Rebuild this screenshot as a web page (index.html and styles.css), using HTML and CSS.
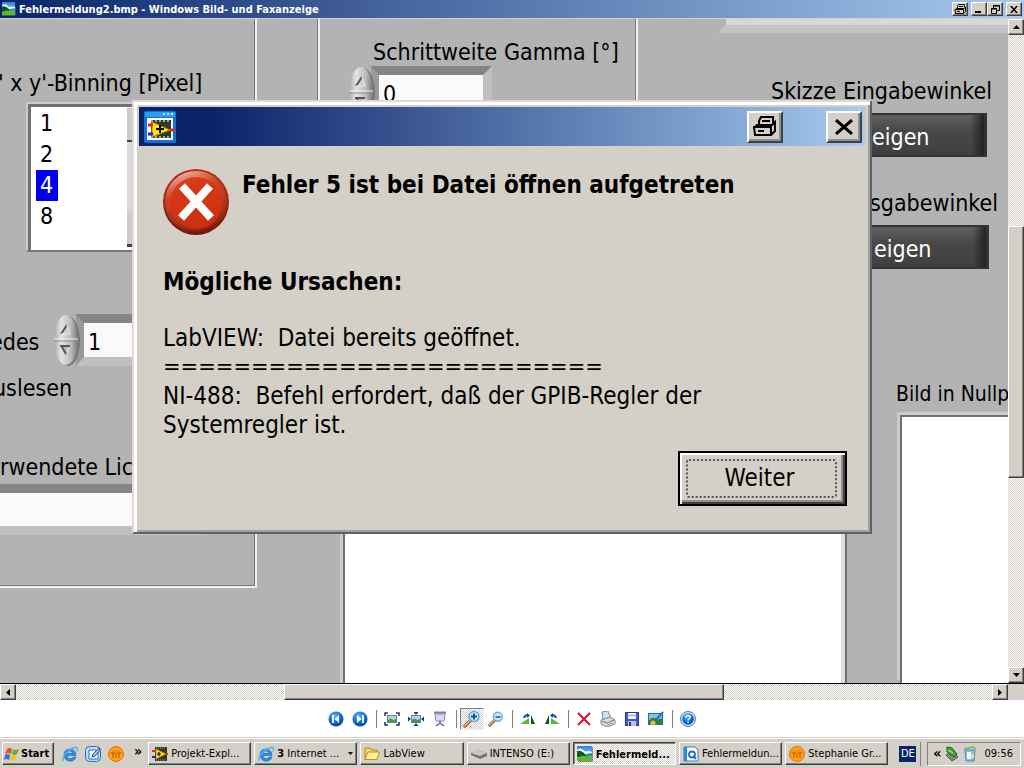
FILE: index.html
```
<!DOCTYPE html>
<html lang="de">
<head>
    <meta charset="UTF-8">
    <meta name="viewport" content="width=device-width, initial-scale=1.0">
    <title>Fehlermeldung2.bmp - Windows Bild- und Faxanzeige</title>
    <link rel="stylesheet" href="styles.css">
</head>
<body>

<!-- shared icons -->
<svg class="defs" aria-hidden="true">
    <defs>
        <linearGradient id="sky" x1="0" y1="0" x2="0" y2="1">
            <stop offset="0" stop-color="#2a80d8"/><stop offset="1" stop-color="#d8f0ff"/>
        </linearGradient>
        <radialGradient id="red" cx="0.5" cy="0.45" r="0.55">
            <stop offset="0" stop-color="#e03a14"/><stop offset="0.65" stop-color="#d03010"/><stop offset="0.85" stop-color="#b02a12"/><stop offset="1" stop-color="#5c1408"/>
        </radialGradient>
        <linearGradient id="shine" x1="0.2" y1="0" x2="0.6" y2="1">
            <stop offset="0" stop-color="#fff" stop-opacity="0.75"/><stop offset="0.35" stop-color="#f0a080" stop-opacity="0.2"/><stop offset="1" stop-color="#400" stop-opacity="0.3"/>
        </linearGradient>
        <radialGradient id="blue" cx="0.4" cy="0.3" r="0.8">
            <stop offset="0" stop-color="#5cb8ff"/><stop offset="0.5" stop-color="#0a70dc"/><stop offset="1" stop-color="#0838a0"/>
        </radialGradient>
        <linearGradient id="metal" x1="0" y1="0" x2="1" y2="0">
            <stop offset="0" stop-color="#aaa"/><stop offset="0.3" stop-color="#e4e4e4"/><stop offset="0.7" stop-color="#bbb"/><stop offset="1" stop-color="#777"/>
        </linearGradient>
    </defs>
    <symbol id="i-picture" viewBox="0 0 16 16">
        <rect x="1" y="1" width="15" height="15" fill="#333" opacity="0.5"/>
        <rect width="15" height="15" fill="url(#sky)"/>
        <path d="M0 4q3-3 6 0t5 1l4 1v4H0z" fill="#fff"/>
        <path d="M0 5q4-1 7 2t4 4H0z" fill="#0a5a1c"/>
        <path d="M9 8l6-1v3H9z" fill="#2080c8"/>
        <path d="M0 12q4-3 8-2t7 0v5H0z" fill="#5cb82c"/>
    </symbol>
    <symbol id="i-labview" viewBox="0 0 16 16">
        <rect x="3" y="1" width="12" height="14" fill="#303828"/>
        <path d="M4 2h10M4 14h10" stroke="#8a9" stroke-dasharray="1 1"/>
        <path d="M4 3l10 5-10 5z" fill="#ffe000" stroke="#a88800" stroke-width="0.6"/>
        <path d="M5 8h4M7 6v4" stroke="#000" stroke-width="1.2"/>
        <path d="M0 5h4M13 8h3" stroke="#e82030" stroke-width="2"/>
        <path d="M0 11h4" stroke="#2020e0" stroke-width="2"/>
    </symbol>
    <symbol id="i-ie" viewBox="0 0 16 16">
        <path d="M14 9.500H5.200c0 4 5 4 5.800 1.500h3c-1.500 6-12 6-12-2.500C2 1 14 1 14 9.500zM5.300 7.300h5.500c-.5-3-5-3-5.500 0z" fill="#2490e8" stroke="#0c58b0" stroke-width="0.5"/>
        <path d="M2 14.500C-3 13 8 1 14 1.500c2 .3 1.500 2.500.8 4" fill="none" stroke="#58b0f0" stroke-width="1.300"/>
    </symbol>
    <symbol id="i-ball" viewBox="0 0 16 16">
        <circle cx="8" cy="8" r="7.500" fill="#ffa010" stroke="#d87800"/>
        <path d="M5 12V7M8 12V7M11 12V7M2.500 7H7M9 7h4.500M5 4.500v1M8 4.500v1M11 4.500v1" stroke="#b85800" fill="none"/>
    </symbol>
    <symbol id="i-printer" viewBox="0 0 13 11">
        <path d="M3.500 4.500v-2l1-2h6v3M1.500 5.500l1-1h7v4M1 5.500h8.500v4h-8zM9.500 5l2-2v4.500l-2 2M5 2.500h4M3 7.500h3" fill="none" stroke="#000"/>
    </symbol>
    <symbol id="i-close" viewBox="0 0 8 7">
        <path d="M0 0h2l2 2.500L6 0h2L5 3.500 8 7H6L4 4.500 2 7H0l3-3.500z" fill="#000"/>
    </symbol>
    <symbol id="i-lens" viewBox="0 0 18 18">
        <path d="M8 10l-6 6" stroke="#a86838" stroke-width="3.500" stroke-linecap="round"/>
        <path d="M7.500 10l-6 6" stroke="#e8b888" stroke-width="1.200"/>
        <circle cx="11" cy="6.500" r="5" fill="#c8e8ff" stroke="#70a8d8" stroke-width="1.600"/>
    </symbol>
    <symbol id="i-spin" viewBox="0 0 26 52">
        <ellipse cx="14" cy="27" rx="12" ry="25" fill="#777"/>
        <ellipse cx="12" cy="26" rx="12" ry="25" fill="url(#metal)"/>
        <path d="M0 25h24" stroke="#eee"/><path d="M0 27h24" stroke="#909090"/>
        <path d="M7 20l6-9" fill="none" stroke="#555" stroke-width="2"/>
        <path d="M13 11l3 9H7" fill="none" stroke="#eee"/>
        <path d="M7 32h9l-4 8z" fill="#bbb" stroke="#eee"/><path d="M6 32h10M8 33l4 7" stroke="#555" stroke-width="2"/>
    </symbol>
</svg>

<header class="titlebar">
    <svg class="icon-14"><use href="#i-picture"/></svg>
    <h1>Fehlermeldung2.bmp - Windows Bild- und Faxanzeige</h1>
    <div class="window-buttons">
        <button class="caption-btn spaced" aria-label="Drucken"><svg width="13" height="11"><use href="#i-printer"/></svg></button>
        <button class="caption-btn" aria-label="Minimieren"><svg width="8" height="8"><path d="M0 7h6" stroke="#000" stroke-width="2"/></svg></button>
        <button class="caption-btn spaced" aria-label="Wiederherstellen"><svg width="9" height="9"><path d="M2.500 3V.5h6v5H6M2 1h7M.5 3.500h5v5h-5zM0 4h6" fill="none" stroke="#000"/></svg></button>
        <button class="caption-btn" aria-label="Schließen"><svg width="8" height="7"><use href="#i-close"/></svg></button>
    </div>
</header>

<main class="viewer">
    <div class="canvas">
        <!-- front panel: freely placed controls -->
        <div class="frame frame-left"></div>
        <div class="frame frame-middle"></div>
        <div class="ridge"></div>

        <label class="text binning-label" for="binning">' x y'-Binning [Pixel]</label>
        <div class="list">
            <select id="binning" size="4">
                <option>1</option>
                <option>2</option>
                <option selected>4</option>
                <option>8</option>
            </select>
            <div class="list-scroll"></div>
        </div>

        <label class="text gamma-label" for="gamma">Schrittweite Gamma [°]</label>
        <div class="spin gamma">
            <svg width="26" height="52"><use href="#i-spin"/></svg>
            <input type="text" id="gamma" value="0">
        </div>

        <label class="text each-label" for="each">edes</label>
        <div class="spin each">
            <svg width="26" height="52"><use href="#i-spin"/></svg>
            <input type="text" id="each" value="1">
        </div>
        <span class="text read-label">uslesen</span>

        <label class="text light-label" for="light">rwendete Lic</label>
        <input type="text" class="light" id="light">

        <span class="text input-angle">Skizze Eingabewinkel</span>
        <button class="dark-btn show-input">eigen</button>
        <span class="text output-angle">sgabewinkel</span>
        <button class="dark-btn show-output">eigen</button>

        <span class="text image-label">Bild in Nullp</span>
        <div class="picture picture-middle"></div>
        <div class="picture picture-right"></div>

        <section class="dialog" role="dialog" aria-labelledby="dialog-title">
            <div class="dialog-bar">
                <svg class="dialog-icon" width="32" height="32" viewBox="0 0 32 32">
                    <rect width="32" height="32" rx="2" fill="#1470dc"/>
                    <path d="M1 1h30v5H1z" fill="#28a0f0"/>
                    <path d="M19 3h10" stroke="#b8e8ff" stroke-width="2" stroke-dasharray="2 2"/>
                    <rect x="3" y="7" width="26" height="22" fill="#fff"/>
                    <rect x="7" y="9" width="20" height="18" fill="#303828"/>
                    <path d="M7 10h20M7 26h20" stroke="#9aa" stroke-width="2" stroke-dasharray="2 2"/>
                    <path d="M8 11l18 8-18 7z" fill="#ffe000" stroke="#a88800"/>
                    <path d="M12 18h8M16 14v8" stroke="#000" stroke-width="2"/>
                    <path d="M4 14h5M26 19h5" stroke="#e82030" stroke-width="3"/>
                    <path d="M4 23h5" stroke="#2020e0" stroke-width="3"/>
                </svg>
                <button class="dialog-btn print" aria-label="Drucken"><svg width="28" height="22"><use href="#i-printer"/></svg></button>
                <button class="dialog-btn" aria-label="Schließen"><svg width="18" height="16"><path d="M1 1l16 14M17 1L1 15" stroke="#000" stroke-width="3"/></svg></button>
            </div>
            <div class="dialog-body">
                <div class="dialog-head">
                    <svg width="66" height="66" viewBox="0 0 66 66">
                        <circle cx="33" cy="33" r="33" fill="url(#red)"/>
                        <circle cx="33" cy="33" r="31" fill="url(#shine)"/>
                        <circle cx="33" cy="34" r="26" fill="#d43210" opacity="0.8"/>
                        <path d="M19 17l29 32M47 17L18 49" stroke="#fff" stroke-width="8"/>
                    </svg>
                    <h2 id="dialog-title">Fehler 5 ist bei Datei öffnen aufgetreten</h2>
                </div>
                <h3>Mögliche Ursachen:</h3>
                <p>LabVIEW:  Datei bereits geöffnet.</p>
                <p class="rule">=========================</p>
                <p>NI-488:  Befehl erfordert, daß der GPIB-Regler der
Systemregler ist.</p>
                <button class="continue"><span>Weiter</span></button>
            </div>
        </section>
    </div>

    <div class="scroll vertical">
        <button class="scroll-btn" aria-label="Nach oben"><svg width="7" height="4"><path d="M0 4h7L3.500 0z"/></svg></button>
        <div class="track before"></div>
        <div class="thumb"></div>
        <div class="track after"></div>
        <button class="scroll-btn" aria-label="Nach unten"><svg width="7" height="4"><path d="M0 0h7L3.500 4z"/></svg></button>
    </div>
    <div class="scroll horizontal">
        <button class="scroll-btn" aria-label="Nach links"><svg width="4" height="7"><path d="M4 0v7L0 3.500z"/></svg></button>
        <div class="track before"></div>
        <div class="thumb"></div>
        <div class="track after"></div>
        <button class="scroll-btn" aria-label="Nach rechts"><svg width="4" height="7"><path d="M0 0v7l4-3.500z"/></svg></button>
    </div>
</main>

<nav class="toolbar">
    <button class="tool" aria-label="Vorheriges Bild"><svg width="16" height="16"><circle cx="8" cy="8" r="7.500" fill="url(#blue)"/><path d="M5 4v8" stroke="#fff" stroke-width="2"/><path d="M11 4v8L6.500 8z" fill="#fff"/></svg></button>
    <button class="tool" aria-label="Nächstes Bild"><svg width="16" height="16"><circle cx="8" cy="8" r="7.500" fill="url(#blue)"/><path d="M11 4v8" stroke="#fff" stroke-width="2"/><path d="M5 4v8l4.500-4z" fill="#fff"/></svg></button>
    <span class="sep"></span>
    <button class="tool" aria-label="Optimale Größe"><svg width="16" height="14"><path d="M1 4V1h3M12 1h3v3M15 10v3h-3M4 13H1v-3" fill="none" stroke="#183878" stroke-width="1.500"/><rect x="3.500" y="3.500" width="9" height="7" fill="#a8d8f8" stroke="#6080a0"/><path d="M4 8q3-3 5 0l3-1v3H4z" fill="#48a020"/></svg></button>
    <button class="tool" aria-label="Tatsächliche Größe"><svg width="16" height="14"><rect x="3.500" y="3.500" width="9" height="7" fill="#a8d8f8" stroke="#6080a0"/><path d="M4 8q3-3 5 0l3-1v3H4z" fill="#48a020"/><path d="M5.500 0h5L8 3zM5.500 14h5L8 11zM0 4.500v5L3 7zM16 4.500v5L13 7z" fill="#183878"/></svg></button>
    <button class="tool" aria-label="Diashow"><svg width="14" height="16"><path d="M1 1.500h12" stroke="#7878a8" stroke-width="2"/><path d="M2 3h10l-1 7H3z" fill="#dcdcf8" stroke="#8888b8"/><path d="M7 10v3M7 12l-4 3M7 12l4 3" stroke="#606080" stroke-width="1.500"/></svg></button>
    <span class="sep"></span>
    <button class="tool pressed" aria-label="Vergrößern"><svg width="18" height="18"><use href="#i-lens"/><path d="M11 3.500v6M8 6.500h6" stroke="#1050a8" stroke-width="2"/></svg></button>
    <button class="tool" aria-label="Verkleinern"><svg width="16" height="16"><use href="#i-lens"/><path d="M7.500 6h5" stroke="#1050a8" stroke-width="1.500"/></svg></button>
    <span class="sep"></span>
    <button class="tool" aria-label="Im Uhrzeigersinn drehen"><svg width="16" height="12"><path d="M0 11L9 5v6z" fill="#58b838"/><path d="M11 2l4 9h-4z" fill="#105818"/><path d="M4 5q1-3 4-3" fill="none" stroke="#1848a0" stroke-width="2"/><path d="M7 0l3 2.500L7 5z" fill="#1848a0"/></svg></button>
    <button class="tool" aria-label="Gegen den Uhrzeigersinn drehen"><svg width="16" height="12"><path d="M16 11L7 5v6z" fill="#58b838"/><path d="M5 2l-4 9h4z" fill="#105818"/><path d="M12 5q-1-3-4-3" fill="none" stroke="#1848a0" stroke-width="2"/><path d="M9 0L6 2.500 9 5z" fill="#1848a0"/></svg></button>
    <span class="sep"></span>
    <button class="tool" aria-label="Löschen"><svg width="14" height="14"><path d="M1 1l12 12M13 1L1 13" stroke="#d81030" stroke-width="2"/></svg></button>
    <button class="tool" aria-label="Drucken"><svg width="16" height="16"><path d="M3 8L2 1l6-1 3 7z" fill="#c8e4fc" stroke="#6890b0"/><path d="M1 9l9-3 5 3v4l-8 3-6-3z" fill="#ddd" stroke="#888"/><path d="M2 10l5 2 7-3" fill="none" stroke="#777"/><path d="M7 14l6-2" stroke="#a8a050"/></svg></button>
    <button class="tool" aria-label="Speichern"><svg width="14" height="14"><rect x="0.500" y="0.500" width="13" height="13" fill="#4858c8" stroke="#283898"/><rect x="3" y="1" width="8" height="6" fill="#e8ecff"/><path d="M3 3.500h8" stroke="#a0a8d8"/><rect x="3" y="9" width="8" height="5" fill="#c0c4d8"/><rect x="4" y="10" width="2" height="4" fill="#283898"/></svg></button>
    <button class="tool" aria-label="Bearbeiten"><svg width="16" height="15"><rect x="0.500" y="2.500" width="14" height="11" fill="#80c4f4" stroke="#306898"/><path d="M1 9q5-5 8 0l5-2v6H1z" fill="#288828"/><path d="M15 1L7 10" stroke="#2868c8" stroke-width="2"/><circle cx="5" cy="12" r="2.500" fill="#e8c030"/></svg></button>
    <span class="sep"></span>
    <button class="tool help" aria-label="Hilfe"><svg width="16" height="16"><circle cx="8" cy="8" r="7.500" fill="#d8e4f8" stroke="#5078b8"/><circle cx="8" cy="8" r="5.800" fill="url(#blue)"/><path d="M5.800 6.500c0-3 4.500-2.500 4.500-.3 0 1.500-2.200 1.500-2.200 3.300M8.100 10.500v1.500" fill="none" stroke="#fff" stroke-width="1.500"/></svg></button>
</nav>

<footer class="taskbar">
    <button class="start">
        <svg width="16" height="16"><path d="M3 3q2-2 5 0L7 8Q4 6 1 8z" fill="#e85020"/><path d="M9 3q3 2 6 0l-2 5q-3 2-5 0z" fill="#60b028"/><path d="M1 9q3-2 5 0l-1 5q-3-2-5 0z" fill="#3870d8"/><path d="M7 9q3 2 6 0l-2 5q-3 2-5 0z" fill="#f8c020"/></svg>
        Start
    </button>
    <div class="quick">
        <a href="#" aria-label="Internet Explorer"><svg class="icon-16"><use href="#i-ie"/></svg></a>
        <a href="#" aria-label="Outlook"><svg width="16" height="16"><rect x="0.500" y="0.500" width="15" height="15" rx="4" fill="#b8dcf8" stroke="#3070b0"/><path d="M4 4h7l2 2v7H4z" fill="#fff" stroke="#2868b0"/><path d="M14 2L8 8l-1 3 3-1 5-6z" fill="#a0c8f0" stroke="#205090"/></svg></a>
        <a href="#" aria-label="Stud.IP"><svg class="icon-16"><use href="#i-ball"/></svg></a>
        <span class="more">»</span>
    </div>
    <div class="tasks">
        <button class="task"><svg class="icon-16"><use href="#i-labview"/></svg><span>Projekt-Expl...</span></button>
        <button class="task"><svg class="icon-16"><use href="#i-ie"/></svg><span><b>3</b> Internet ...</span><svg class="drop" width="5" height="3"><path d="M0 0h5L2.500 3z"/></svg></button>
        <button class="task"><svg class="icon-16" viewBox="0 0 16 16"><path d="M1 13V3l1-1h4l2 2h5v9z" fill="#f8d860" stroke="#a88018"/><path d="M1 13.500L4 6h11.500L13 13.500z" fill="#fff098" stroke="#b89020"/></svg><span>LabView</span></button>
        <button class="task"><svg class="icon-16" viewBox="0 0 16 16"><path d="M0 7l6-3 10 3v3l-7 3-9-4z" fill="#707070"/><path d="M0 7l6-3 10 3-7 3z" fill="#c8c8c8"/></svg><span>INTENSO (E:)</span></button>
        <button class="task active"><svg class="icon-16"><use href="#i-picture"/></svg><span>Fehlermeld...</span></button>
        <button class="task"><svg class="icon-16" viewBox="0 0 16 16"><path d="M1 1h11l3 3v11H1z" fill="#fff" stroke="#3080c0"/><path d="M1 1h3v14H1z" fill="#2090d8"/><circle cx="9" cy="8.500" r="3" fill="none" stroke="#2070c0" stroke-width="1.800"/><path d="M10 10l3 3" stroke="#2070c0" stroke-width="2"/></svg><span>Fehlermeldun...</span></button>
        <button class="task"><svg class="icon-16"><use href="#i-ball"/></svg><span>Stephanie Gr...</span></button>
    </div>
    <span class="lang">DE</span>
    <div class="tray">
        <span class="more">«</span>
        <svg width="14" height="16"><path d="M1 9l7-3 5 5-6 4z" fill="#888" stroke="#555"/><path d="M2 1l5 1 5 6-3 3-7-5z" fill="#38a838" stroke="#186818"/><path d="M3 4l5 3" stroke="#c0f0c0"/></svg>
        <svg width="14" height="16"><path d="M2 4h10l-1 11H3z" fill="#88c0f0" stroke="#4888c8"/><path d="M4 6h4v7H4z" fill="#e8f8ff"/><path d="M1 3l9-2 3 2" fill="none" stroke="#70b840" stroke-width="1.500"/><path d="M8 8h3v4H8z" fill="#f0e070"/></svg>
        <time>09:56</time>
    </div>
</footer>

</body>
</html>
```
FILE: styles.css
```
* {
    box-sizing: border-box;
}

body {
    margin: 0;
    height: 100vh;
    display: flex;
    flex-direction: column;
    overflow: hidden;
    background-color: #d4d0c8;
    color: #000;
    font-family: "DejaVu Sans Condensed", "DejaVu Sans", sans-serif;
    font-size: 11px;
}

button, input, select {
    font: inherit;
    color: inherit;
    margin: 0;
    padding: 0;
    border-radius: 0;
}

h1, h2, h3, p {
    margin: 0;
}

svg {
    display: block;
    flex: none;
}

.defs {
    position: absolute;
    width: 0;
    height: 0;
}

.icon-14 {
    width: 14px;
    height: 14px;
}

.icon-16 {
    width: 16px;
    height: 16px;
}

/* title bar */
.titlebar {
    flex: none;
    height: 19px;
    display: flex;
    align-items: center;
    gap: 3px;
    padding: 0 2px;
    background: linear-gradient(to right, #0a246a, #a6caf0);
    border-bottom: 1px solid #d4d0c8;
    color: white;
}

.titlebar h1 {
    flex: 1;
    font-size: 11px;
    white-space: nowrap;
}

.window-buttons {
    display: flex;
}

.caption-btn, .scroll-btn, .thumb {
    display: flex;
    align-items: center;
    justify-content: center;
    background-color: #d4d0c8;
    border: 1px solid;
    border-color: #fff #404040 #404040 #fff;
    box-shadow: inset -1px -1px #808080;
}

.caption-btn {
    width: 16px;
    height: 14px;
}

.caption-btn.spaced {
    margin-right: 3px;
}

/* viewer */
.viewer {
    flex: 1;
    min-height: 0;
    display: grid;
    grid-template-columns: minmax(0, 1fr) 16px;
    grid-template-rows: minmax(0, 1fr) 16px;
}

.canvas {
    position: relative;
    overflow: hidden;
    background-color: #b3b3b3;
    border-bottom: 1px solid #000;
    font-size: 23px;
}

.text {
    position: absolute;
    line-height: 26px;
    white-space: nowrap;
}

.frame {
    position: absolute;
    border: 1px solid #777;
    box-shadow: 0 0 0 2px #f0f0f0;
}

.frame-left {
    left: -10px;
    top: -10px;
    width: 265px;
    height: 577px;
}

.frame-middle {
    left: 317px;
    top: -10px;
    width: 319px;
    height: 300px;
    box-shadow: inset 2px 0 #f0f0f0, 2px 0 #f0f0f0;
}

.ridge {
    position: absolute;
    left: 718px;
    right: 0;
    top: 0;
    height: 14px;
    background: linear-gradient(#d8d8d8 6px, #c4c4c4 6px);
    clip-path: polygon(8px 0, 100% 0, 100% 100%, 0 100%, 8px 6px);
}

.binning-label { left: -2px; top: 51px; }
.gamma-label { left: 373px; top: 20px; }
.each-label { left: -10px; top: 310px; }
.read-label { left: -7px; top: 356px; }
.light-label { left: 0; top: 435px; }
.input-angle { left: 771px; top: 59px; }
.output-angle { left: 870px; top: 171px; }
.image-label { left: 896px; top: 362px; font-size: 21px; }

.list {
    position: absolute;
    left: 26px;
    top: 83px;
    width: 120px;
    height: 150px;
    display: flex;
    background-color: white;
    border: 2px solid #ccc;
    border-bottom-color: #777;
    box-shadow: inset 3px 3px #707070;
    padding: 4px 4px 3px 5px;
}

.list select {
    width: 94px;
    border: 0;
    outline: 0;
    background: none;
    overflow: hidden;
    scrollbar-width: none;
}

.list option {
    width: 22px;
    height: 31px;
    margin-left: 3px;
    padding: 2px 4px 0;
}

.list option:checked {
    background: linear-gradient(#0000f0, #0000f0);
    -webkit-text-fill-color: white;
}

.list-scroll {
    flex: 1;
    background: linear-gradient(#ccc 32px, #444 32px 34px, #d8d8d8 34px 104px, #ccc 104px 136px, #444 136px);
}

.spin {
    position: absolute;
    display: flex;
    align-items: center;
}

.spin input, .light {
    border: 9px solid;
    border-color: #858585 #c0c0c0 #c0c0c0 #999;
    background-color: #fafafa;
    outline: 0;
}

.spin input {
    width: 121px;
    height: 52px;
    margin-left: -4px;
    border-left-width: 8px;
    padding: 3px 0 0 4px;
}

.spin svg {
    z-index: 1;
}

.gamma {
    left: 349px;
    top: 47px;
}

.each {
    left: 54px;
    top: 295px;
}

.light {
    position: absolute;
    left: -10px;
    top: 465px;
    width: 216px;
    height: 51px;
}

.dark-btn {
    position: absolute;
    left: 760px;
    height: 44px;
    border: 2px solid #333;
    border-right-width: 3px;
    background: linear-gradient(to right, transparent 94%, #222), linear-gradient(#606060, #484848 40%, #404040);
    color: white;
    text-align: left;
    padding: 4px 0 0 110px;
}

.show-input {
    top: 94px;
    width: 227px;
}

.show-output {
    top: 206px;
    width: 229px;
    padding-left: 112px;
}

.picture {
    position: absolute;
    bottom: 0;
    background-color: white;
    border: 2px solid #707070;
    border-bottom: 0;
    box-shadow: -3px -3px #ccc;
}

.picture-middle {
    left: 343px;
    top: 400px;
    width: 504px;
    box-shadow: -3px 0 #ccc, inset -4px 0 #ddd;
}

.picture-right {
    left: 900px;
    top: 396px;
    width: 140px;
}

/* error dialog lying over the front panel */
.dialog {
    position: absolute;
    z-index: 2;
    left: 132px;
    top: 81px;
    width: 740px;
    background-color: #d4d0c8;
    border: 2px solid;
    border-color: #e0dcd4 #606060 #606060 #e0dcd4;
    box-shadow: inset 3px 3px #fff, inset -2px -2px #a0a0a0;
    padding: 5px;
    font-size: 24px;
}

.dialog-bar {
    display: flex;
    align-items: center;
    height: 39px;
    padding: 0 3px 0 5px;
    background: linear-gradient(to right, #0a246a 10%, #a6caf0);
}

.dialog-icon {
    margin-right: auto;
}

.dialog-btn {
    width: 36px;
    height: 32px;
    display: flex;
    align-items: center;
    justify-content: center;
    background-color: #d4d0c8;
    border: 2px solid;
    border-color: #fff #404040 #404040 #fff;
    box-shadow: inset -2px -2px #909090;
}

.dialog-btn.print {
    margin-right: 43px;
}

.dialog-body {
    display: flex;
    flex-direction: column;
    padding: 23px 18px 21px 24px;
    line-height: 29px;
}

.dialog-head {
    display: flex;
    gap: 13px;
}

.dialog h2, .dialog h3 {
    font-size: 24px;
    line-height: 32px;
}

.dialog h3 {
    margin: 31px 0 26px;
}

.dialog p {
    white-space: pre-wrap;
}

.dialog .rule {
    font-family: "DejaVu Sans", sans-serif;
    font-size: 21px;
}

.continue {
    align-self: flex-end;
    width: 169px;
    height: 55px;
    margin-top: 11px;
    padding: 5px;
    background-color: #d4d0c8;
    border: 2px solid #000;
    box-shadow: inset 2px 2px #fff, inset -2px -2px #404040, inset -4px -4px #909090;
}

.continue span {
    display: flex;
    align-items: center;
    justify-content: center;
    height: 39px;
    margin: 0 3px 0 1px;
    padding-right: 4px;
    border: 2px dotted #555;
    border-radius: 3px;
}

/* scroll bars */
.scroll {
    display: flex;
}

.scroll.vertical {
    flex-direction: column;
    border-bottom: 1px solid #000;
}

.scroll-btn {
    flex: none;
    width: 16px;
    height: 16px;
}

.track {
    background: repeating-conic-gradient(#fff 0 25%, #d4d0c8 0 50%) 0 0 / 2px 2px;
}

.vertical .before { flex: 192; }
.vertical .thumb { flex: 250; }
.vertical .after { flex: 190; }
.horizontal .before { flex: 269; }
.horizontal .thumb { flex: 438; }
.horizontal .after { flex: 269; }

/* viewer toolbar */
.toolbar {
    flex: none;
    height: 38px;
    display: flex;
    align-items: center;
    justify-content: center;
    background-color: white;
    border-bottom: 1px solid #d4d0c8;
}

.tool {
    width: 24px;
    height: 22px;
    display: flex;
    align-items: center;
    justify-content: center;
    background: none;
    border: 0;
}

.tool.pressed {
    background: repeating-conic-gradient(#fff 0 25%, #d4d0c8 0 50%) 0 0 / 2px 2px;
    border: 1px solid;
    border-color: #808080 #eee #eee #808080;
}

.sep {
    width: 8px;
    height: 18px;
    background: linear-gradient(#808080, #808080) center / 1px 100% no-repeat;
}

/* task bar */
.taskbar {
    flex: none;
    height: 30px;
    display: flex;
    align-items: center;
    padding: 2px 3px 2px 2px;
    border-top: 1px solid #fff;
    background-color: #d4d0c8;
}

.start, .task {
    display: flex;
    align-items: center;
    height: 23px;
    background-color: #d4d0c8;
    border: 1px solid;
    border-color: #fff #404040 #404040 #fff;
    box-shadow: inset -1px -1px #808080;
    white-space: nowrap;
}

.start {
    width: 52px;
    gap: 1px;
    padding-left: 1px;
    font-weight: bold;
}

.quick {
    display: flex;
    align-items: center;
    gap: 7px;
    margin: 0 6px 0 8px;
}

.more {
    font-size: 14px;
    font-weight: bold;
    line-height: 16px;
    margin: 0 0 6px 3px;
}

.tasks {
    flex: 1;
    min-width: 0;
    display: flex;
    gap: 3px;
}

.task {
    flex: 1 1 0;
    min-width: 0;
    gap: 3px;
    padding: 0 3px;
    overflow: hidden;
}

.task.active {
    font-weight: bold;
    border-color: #404040 #fff #fff #404040;
    background: repeating-conic-gradient(#fff 0 25%, #d4d0c8 0 50%) 0 0 / 2px 2px;
    box-shadow: inset 1px 1px #808080;
    padding-top: 1px;
}

.drop {
    margin-left: auto;
}

.lang {
    margin: 0 5px 0 11px;
    width: 17px;
    line-height: 16px;
    text-align: center;
    background-color: #0a246a;
    color: white;
}

.tray {
    display: flex;
    align-items: center;
    gap: 4px;
    height: 24px;
    margin-left: 6px;
    padding: 0 7px 0 2px;
    border: 1px solid;
    border-color: #808080 #fff #fff #808080;
    box-shadow: -6px 0 #d4d0c8, -7px 0 #808080;
}

.tray .more {
    margin-bottom: 2px;
}

.tray time {
    margin-left: 3px;
}
```
